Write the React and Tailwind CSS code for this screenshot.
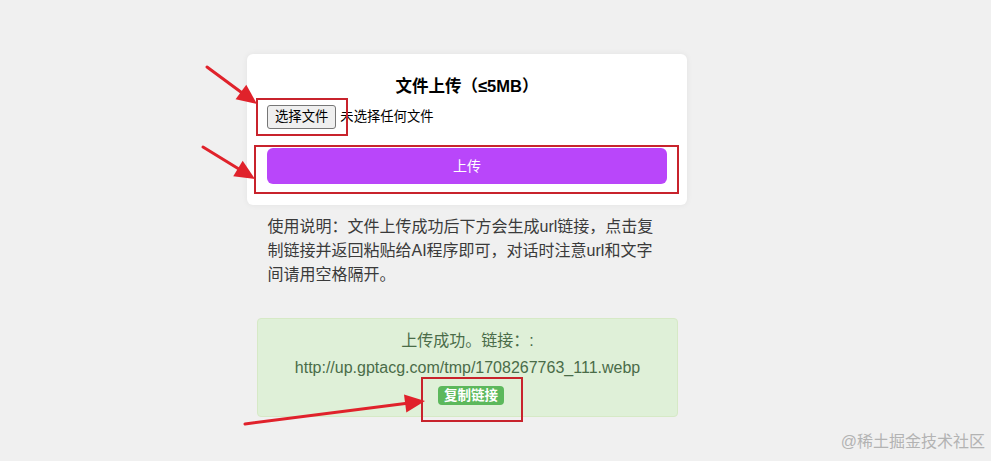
import React from 'react';

const CJK = "font-['Liberation_Sans','Noto_Sans_CJK_SC',sans-serif]";

// annotation arrow: shaft + filled head, tip at (x2, y2)
function Arrow({ x1, y1, x2, y2 }) {
  const dx = x2 - x1;
  const dy = y2 - y1;
  const len = Math.hypot(dx, dy);
  const ux = dx / len;
  const uy = dy / len;
  const bx = x2 - ux * 20;
  const by = y2 - uy * 20;
  const px = -uy * 9;
  const py = ux * 9;
  return (
    <g>
      <line x1={x1} y1={y1} x2={bx + ux * 2} y2={by + uy * 2} stroke="#e0222b" strokeWidth="3" strokeLinecap="round" />
      <polygon points={`${x2},${y2} ${bx + px},${by + py} ${bx - px},${by - py}`} fill="#e0222b" />
    </g>
  );
}

export default function App() {
  return (
    <div className={`relative h-[461px] w-full overflow-hidden bg-[#f0f0f0] ${CJK}`}>
      <div className="ml-[247px] flex w-[440px] flex-col pt-[54px]">
        <div className="flex flex-col rounded-md bg-white px-5 pb-[21px] pt-5 shadow-[0_0_6px_rgba(0,0,0,0.06)]">
          <h2 className="text-center text-[16.5px] font-bold leading-6 text-black">文件上传（≤5MB）</h2>
          <div className="mt-[7px] flex items-center gap-1">
            <span className="rounded-[3px] border border-[#767676] bg-[#efefef] px-[7px] text-[13.33px] leading-[22px] text-black">选择文件</span>
            <span className="text-[13.33px] text-black">未选择任何文件</span>
          </div>
          <button className="mt-[19px] h-9 w-full rounded-md bg-[#b946fa] text-[14px] text-white">上传</button>
        </div>

        <p className="mt-[10px] w-[401px] self-center pl-[1px] text-[16px] leading-6 text-[#3a3a3a]">
          使用说明：文件上传成功后下方会生成url链接，点击复制链接并返回粘贴给AI程序即可，对话时注意url和文字间请用空格隔开。
        </p>

        <div className="ml-[10px] mt-[31px] flex w-[421px] flex-col items-center rounded border border-[#d6e9c6] bg-[#dff0d8] pb-[11px] pt-[8px] text-[16px] leading-[27px] text-[#4a6c48]">
          <span>上传成功。链接：:</span>
          <span>http://up.gptacg.com/tmp/1708267763_111.webp</span>
          <span className="ml-[7px] mt-[5px] rounded bg-[#5cb85c] px-[6px] text-[13.5px] font-bold leading-[19px] text-white">复制链接</span>
        </div>
      </div>

      {/* screenshot annotations */}
      <div className="absolute left-[256px] top-[98px] h-[38px] w-[92px] border-2 border-[#c8232c]" />
      <div className="absolute left-[254px] top-[145px] h-[49px] w-[425px] border-2 border-[#c8232c]" />
      <div className="absolute left-[421px] top-[377px] h-[45px] w-[102px] border-2 border-[#c8232c]" />
      <svg className="pointer-events-none absolute left-0 top-0" width="991" height="461">
        <Arrow x1={207} y1={67} x2={257} y2={104} />
        <Arrow x1={203} y1={147} x2={255} y2={179} />
        <Arrow x1={245} y1={424} x2={425} y2={401} />
      </svg>

      <span className="absolute right-[6px] top-[432px] text-[16px] leading-5 text-[#b3b3b3]">@稀土掘金技术社区</span>
    </div>
  );
}
